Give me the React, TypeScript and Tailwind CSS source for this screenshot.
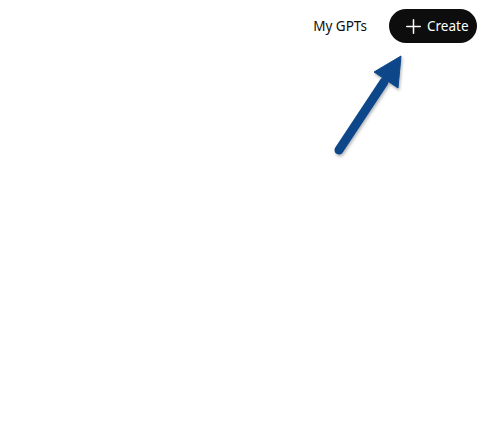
export default function App() {
  return (
    <div className="relative h-[421px] w-[492px] bg-white overflow-hidden" style={{ fontFamily: '"Noto Sans", "Open Sans", sans-serif' }}>
      {/* Top bar */}
      <div className="flex items-center justify-end gap-[22px] pt-[9px] pr-[15px]">
        <span className="text-[13.5px] text-[#0d0d0d]">My GPTs</span>
        <button className="flex h-[34px] w-[88px] items-center gap-[6px] rounded-full bg-[#0d0d0d] pl-[17px] text-[13.5px] text-white">
          <svg width="15" height="15" viewBox="0 0 15 15" fill="none" stroke="currentColor" strokeWidth="1.5" strokeLinecap="round">
            <path d="M7.5 0.75v13.5M0.75 7.5h13.5" />
          </svg>
          <span>Create</span>
        </button>
      </div>

      {/* Annotation arrow */}
      <svg className="absolute inset-0 pointer-events-none" width="492" height="421" viewBox="0 0 492 421">
        <defs>
          <filter id="sh" x="-20%" y="-20%" width="140%" height="140%">
            <feDropShadow dx="1" dy="2" stdDeviation="1.5" floodColor="#000" floodOpacity="0.3" />
          </filter>
        </defs>
        <g filter="url(#sh)" fill="#0a478a" stroke="#0a478a">
          <line x1="339" y1="150" x2="384" y2="82" strokeWidth="9" strokeLinecap="round" />
          <polygon points="401,56 374,72 398,88" strokeWidth="1" strokeLinejoin="round" />
        </g>
      </svg>
    </div>
  )
}
